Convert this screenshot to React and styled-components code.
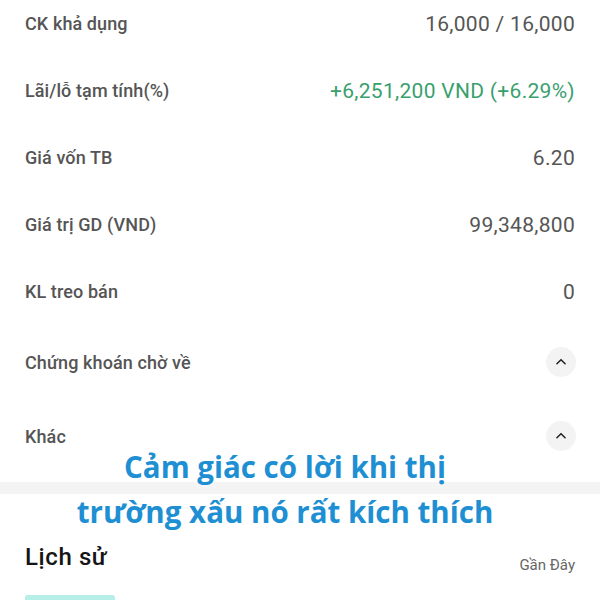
import React from "react";
import styled, { createGlobalStyle } from "styled-components";

const Global = createGlobalStyle`
  html, body { margin: 0; padding: 0; background: #fff; }
  body { font-family: Roboto, "Noto Sans", sans-serif; overflow: hidden; }
`;

const Page = styled.div`
  position: relative;
  width: 600px;
  height: 600px;
  overflow: hidden;
  background: #fff;
`;

const List = styled.div`
  display: flex;
  flex-direction: column;
  margin-top: -10px;
  padding: 0 25px;
`;

const Row = styled.div`
  display: flex;
  align-items: center;
  justify-content: space-between;
  height: ${(p) => (p.$tall ? 74 : 67)}px;
`;

const Label = styled.span`
  font-size: 18px;
  font-weight: 500;
  color: #555;
  letter-spacing: 0.1px;
`;

const Value = styled.span`
  font-size: 21px;
  font-weight: 400;
  letter-spacing: 0.3px;
  color: ${(p) => (p.$positive ? "#3a9f6e" : "#555")};
`;

const Toggle = styled.span`
  display: flex;
  align-items: center;
  justify-content: center;
  width: 30px;
  height: 30px;
  border-radius: 50%;
  background: #f3f3f3;
  margin-right: -1px;
`;

const Divider = styled.div`
  height: 12px;
  background: #f4f4f4;
  margin-top: 9px;
`;

const History = styled.div`
  display: flex;
  align-items: flex-end;
  justify-content: space-between;
  padding: 48px 25px 0;
`;

const HistoryTitle = styled.span`
  font-size: 24px;
  font-weight: 500;
  letter-spacing: 0.6px;
  color: #151515;
  line-height: 30px;
`;

const HistoryLink = styled.span`
  font-size: 15px;
  color: #666;
  line-height: 20px;
  margin-bottom: -3px;
`;

const TabBar = styled.div`
  width: 90px;
  height: 6px;
  margin: 23px 0 0 25px;
  background: #b5efe8;
  border-radius: 3px 3px 0 0;
`;

const Caption = styled.div`
  position: absolute;
  left: 0;
  right: 30px;
  top: 446px;
  display: flex;
  flex-direction: column;
  align-items: center;
  gap: 3px;
  pointer-events: none;
`;

const CaptionLine = styled.span`
  font-family: "Open Sans", "Noto Sans", sans-serif;
  font-weight: 700;
  font-size: 29.5px;
  line-height: 42px;
  color: #1e8fd2;
  text-shadow: 0 0 4px rgba(255, 255, 255, 0.9);
`;

const Chevron = () => (
  <svg width="14" height="14" viewBox="0 0 24 24" fill="none" stroke="#222" strokeWidth="2.6" strokeLinecap="round" strokeLinejoin="round">
    <path d="M5 15l7-7 7 7" />
  </svg>
);

const rows = [
  { label: "CK khả dụng", value: "16,000 / 16,000" },
  { label: "Lãi/lỗ tạm tính(%)", value: "+6,251,200 VND (+6.29%)", positive: true },
  { label: "Giá vốn TB", value: "6.20" },
  { label: "Giá trị GD (VND)", value: "99,348,800" },
  { label: "KL treo bán", value: "0" },
];

const sections = ["Chứng khoán chờ về", "Khác"];

export default function App() {
  return (
    <Page>
      <Global />
      <List>
        {rows.map((r) => (
          <Row key={r.label}>
            <Label>{r.label}</Label>
            <Value $positive={r.positive}>{r.value}</Value>
          </Row>
        ))}
        {sections.map((s) => (
          <Row key={s} $tall>
            <Label>{s}</Label>
            <Toggle>
              <Chevron />
            </Toggle>
          </Row>
        ))}
      </List>
      <Divider />
      <History>
        <HistoryTitle>Lịch sử</HistoryTitle>
        <HistoryLink>Gần Đây</HistoryLink>
      </History>
      <TabBar />
      <Caption>
        <CaptionLine>Cảm giác có lời khi thị</CaptionLine>
        <CaptionLine>trường xấu nó rất kích thích</CaptionLine>
      </Caption>
    </Page>
  );
}
